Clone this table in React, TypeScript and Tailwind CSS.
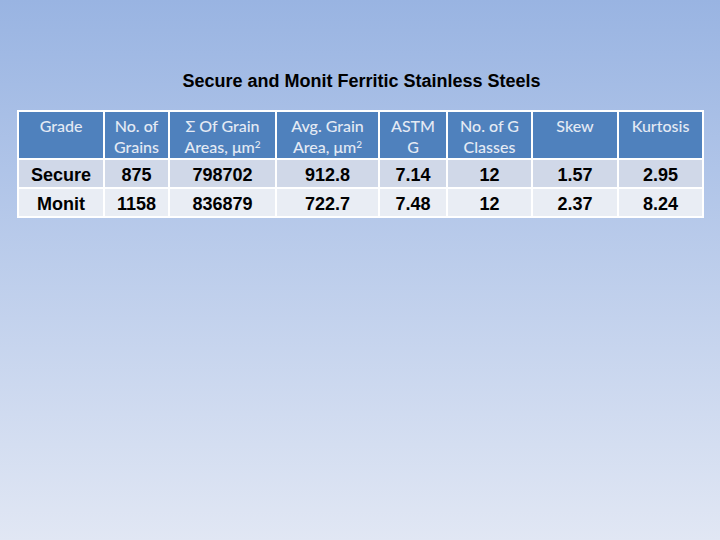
import React from 'react';

const cols = [86, 65, 107, 103, 68, 85, 86, 85];

const rows = [
  ['Secure', '875', '798702', '912.8', '7.14', '12', '1.57', '2.95'],
  ['Monit', '1158', '836879', '722.7', '7.48', '12', '2.37', '8.24'],
];

export default function App() {
  return (
    <div className="w-[720px] h-[540px] bg-gradient-to-b from-[#99b4e2] to-[#e1e7f4] pt-[71px] px-[17px] font-['Liberation_Sans',Arial,sans-serif]">
      <h1 className="text-center text-[18px] font-bold text-black leading-[20px] ml-[3px]">
        Secure and Monit Ferritic Stainless Steels
      </h1>
      <table className="mt-[19px] border-collapse border-2 border-white table-fixed w-[686px]">
        <colgroup>
          {cols.map((w, i) => (
            <col key={i} style={{ width: w }} />
          ))}
        </colgroup>
        <thead>
          <tr className="bg-[#4f81bd] text-[#e4eaf4] font-['Lato',sans-serif] text-[16px] leading-[21px] h-[48px] align-top">
            <th className="border-2 border-white font-medium pt-[3px] px-0">Grade</th>
            <th className="border-2 border-white font-medium pt-[3px] px-0">No. of<br />Grains</th>
            <th className="border-2 border-white font-medium pt-[3px] px-0">
              &Sigma; Of Grain<br />Areas, &mu;m<sup className="text-[10px]">2</sup>
            </th>
            <th className="border-2 border-white font-medium pt-[3px] px-0">
              Avg. Grain<br />Area, &mu;m<sup className="text-[10px]">2</sup>
            </th>
            <th className="border-2 border-white font-medium pt-[3px] px-0">ASTM<br />G</th>
            <th className="border-2 border-white font-medium pt-[3px] px-0">No. of G<br />Classes</th>
            <th className="border-2 border-white font-medium pt-[3px] px-0">Skew</th>
            <th className="border-2 border-white font-medium pt-[3px] px-0">Kurtosis</th>
          </tr>
        </thead>
        <tbody>
          {rows.map((r, i) => (
            <tr key={i} className={`${i === 0 ? 'bg-[#d0d8e8]' : 'bg-[#e9edf4]'} h-[29px] text-[18px] font-bold text-black`}>
              {r.map((c, j) => (
                <td key={j} className="border-2 border-white text-center leading-[20px] pt-[2px]">{c}</td>
              ))}
            </tr>
          ))}
        </tbody>
      </table>
    </div>
  );
}
